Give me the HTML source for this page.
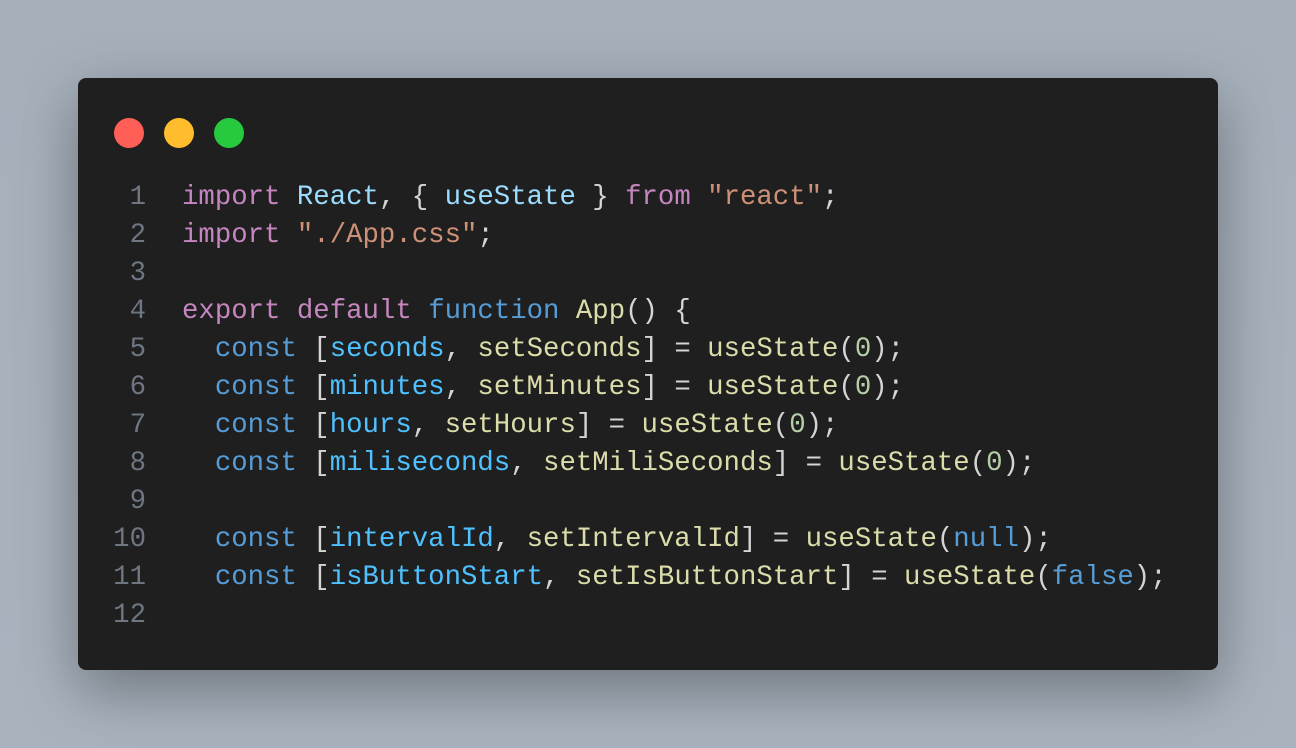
<!DOCTYPE html>
<html><head><style>
html,body{margin:0;padding:0;}
body{width:1296px;height:748px;background:linear-gradient(180deg,#a6b0bb,#a9b3be);position:relative;overflow:hidden;}
.win{position:absolute;left:78px;top:78px;width:1140px;height:592px;background:#1f1f1f;border-radius:8px;box-shadow:0 20px 60px rgba(0,0,0,0.35);}
.dot{position:absolute;top:40px;width:30px;height:30px;border-radius:50%;}
.code{position:absolute;left:0;top:101px;font-family:"Liberation Mono",monospace;font-size:27.35px;line-height:38px;white-space:pre;color:#d4d4d4;}
.ln{display:inline-block;width:68px;text-align:right;color:#6e7681;margin-right:36px;}
.k{color:#c586c0}.v{color:#9cdcfe}.s{color:#ce9178}.b{color:#569cd6}.f{color:#dcdcaa}.c{color:#4fc1ff}.n{color:#b5cea8}
</style></head><body>
<div class="win">
<div class="dot" style="left:36px;background:#ff5f56"></div>
<div class="dot" style="left:86px;background:#ffbd2e"></div>
<div class="dot" style="left:136px;background:#27c93f"></div>
<div class="code"><span class="ln">1</span><span class="k">import</span> <span class="v">React</span>, { <span class="v">useState</span> } <span class="k">from</span> <span class="s">"react"</span>;
<span class="ln">2</span><span class="k">import</span> <span class="s">"./App.css"</span>;
<span class="ln">3</span>
<span class="ln">4</span><span class="k">export</span> <span class="k">default</span> <span class="b">function</span> <span class="f">App</span>() {
<span class="ln">5</span>  <span class="b">const</span> [<span class="c">seconds</span>, <span class="f">setSeconds</span>] = <span class="f">useState</span>(<span class="n">0</span>);
<span class="ln">6</span>  <span class="b">const</span> [<span class="c">minutes</span>, <span class="f">setMinutes</span>] = <span class="f">useState</span>(<span class="n">0</span>);
<span class="ln">7</span>  <span class="b">const</span> [<span class="c">hours</span>, <span class="f">setHours</span>] = <span class="f">useState</span>(<span class="n">0</span>);
<span class="ln">8</span>  <span class="b">const</span> [<span class="c">miliseconds</span>, <span class="f">setMiliSeconds</span>] = <span class="f">useState</span>(<span class="n">0</span>);
<span class="ln">9</span>
<span class="ln">10</span>  <span class="b">const</span> [<span class="c">intervalId</span>, <span class="f">setIntervalId</span>] = <span class="f">useState</span>(<span class="b">null</span>);
<span class="ln">11</span>  <span class="b">const</span> [<span class="c">isButtonStart</span>, <span class="f">setIsButtonStart</span>] = <span class="f">useState</span>(<span class="b">false</span>);
<span class="ln">12</span></div>
</div>
</body></html>
